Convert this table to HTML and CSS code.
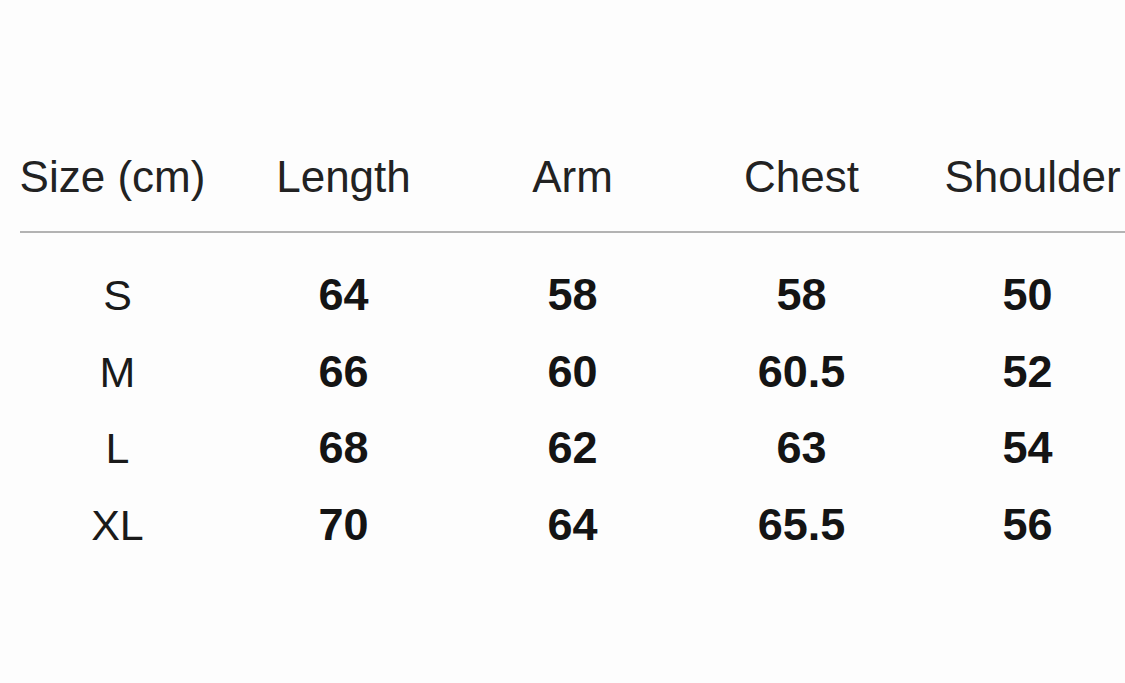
FILE: index.html
```html
<!DOCTYPE html>
<html>
<head>
<meta charset="utf-8">
<link rel="stylesheet" href="styles.css">
</head>
<body>
<div class="chart">
  <div class="row head">
    <div class="cell">Size (cm)</div>
    <div class="cell">Length</div>
    <div class="cell">Arm</div>
    <div class="cell">Chest</div>
    <div class="cell">Shoulder</div>
  </div>
  <div class="rule"></div>
  <div class="body">
    <div class="row data"><div class="cell size">S</div><div class="cell">64</div><div class="cell">58</div><div class="cell">58</div><div class="cell">50</div></div>
    <div class="row data"><div class="cell size">M</div><div class="cell">66</div><div class="cell">60</div><div class="cell">60.5</div><div class="cell">52</div></div>
    <div class="row data"><div class="cell size">L</div><div class="cell">68</div><div class="cell">62</div><div class="cell">63</div><div class="cell">54</div></div>
    <div class="row data"><div class="cell size">XL</div><div class="cell">70</div><div class="cell">64</div><div class="cell">65.5</div><div class="cell">56</div></div>
  </div>
</div>
</body>
</html>
```

FILE: styles.css
```css
html, body {
  margin: 0;
  padding: 0;
  background: #fdfdfd;
  width: 1125px;
  height: 683px;
  overflow: hidden;
}
.chart {
  font-family: "Liberation Sans", Arial, sans-serif;
  padding-top: 155px;
}
.row {
  display: grid;
  grid-template-columns: repeat(5, 229px);
}
.cell {
  text-align: center;
  white-space: nowrap;
}
.head {
  font-size: 44px;
  line-height: 44px;
  color: #222;
}
.head .cell:first-child {
  margin-left: -4px;
}
.head .cell:last-child {
  margin-left: 4px;
}
.rule {
  margin: 32px 0 0 20px;
  height: 2px;
  background: #b3b3b3;
}
.body {
  padding-top: 24px;
}
.data {
  font-size: 45px;
  line-height: 76.6px;
  font-weight: bold;
  color: #141414;
}
.data .size {
  font-weight: normal;
  font-size: 43px;
  color: #1a1a1a;
  padding-left: 6px;
}
.data .cell:last-child {
  margin-left: -6px;
}
```
